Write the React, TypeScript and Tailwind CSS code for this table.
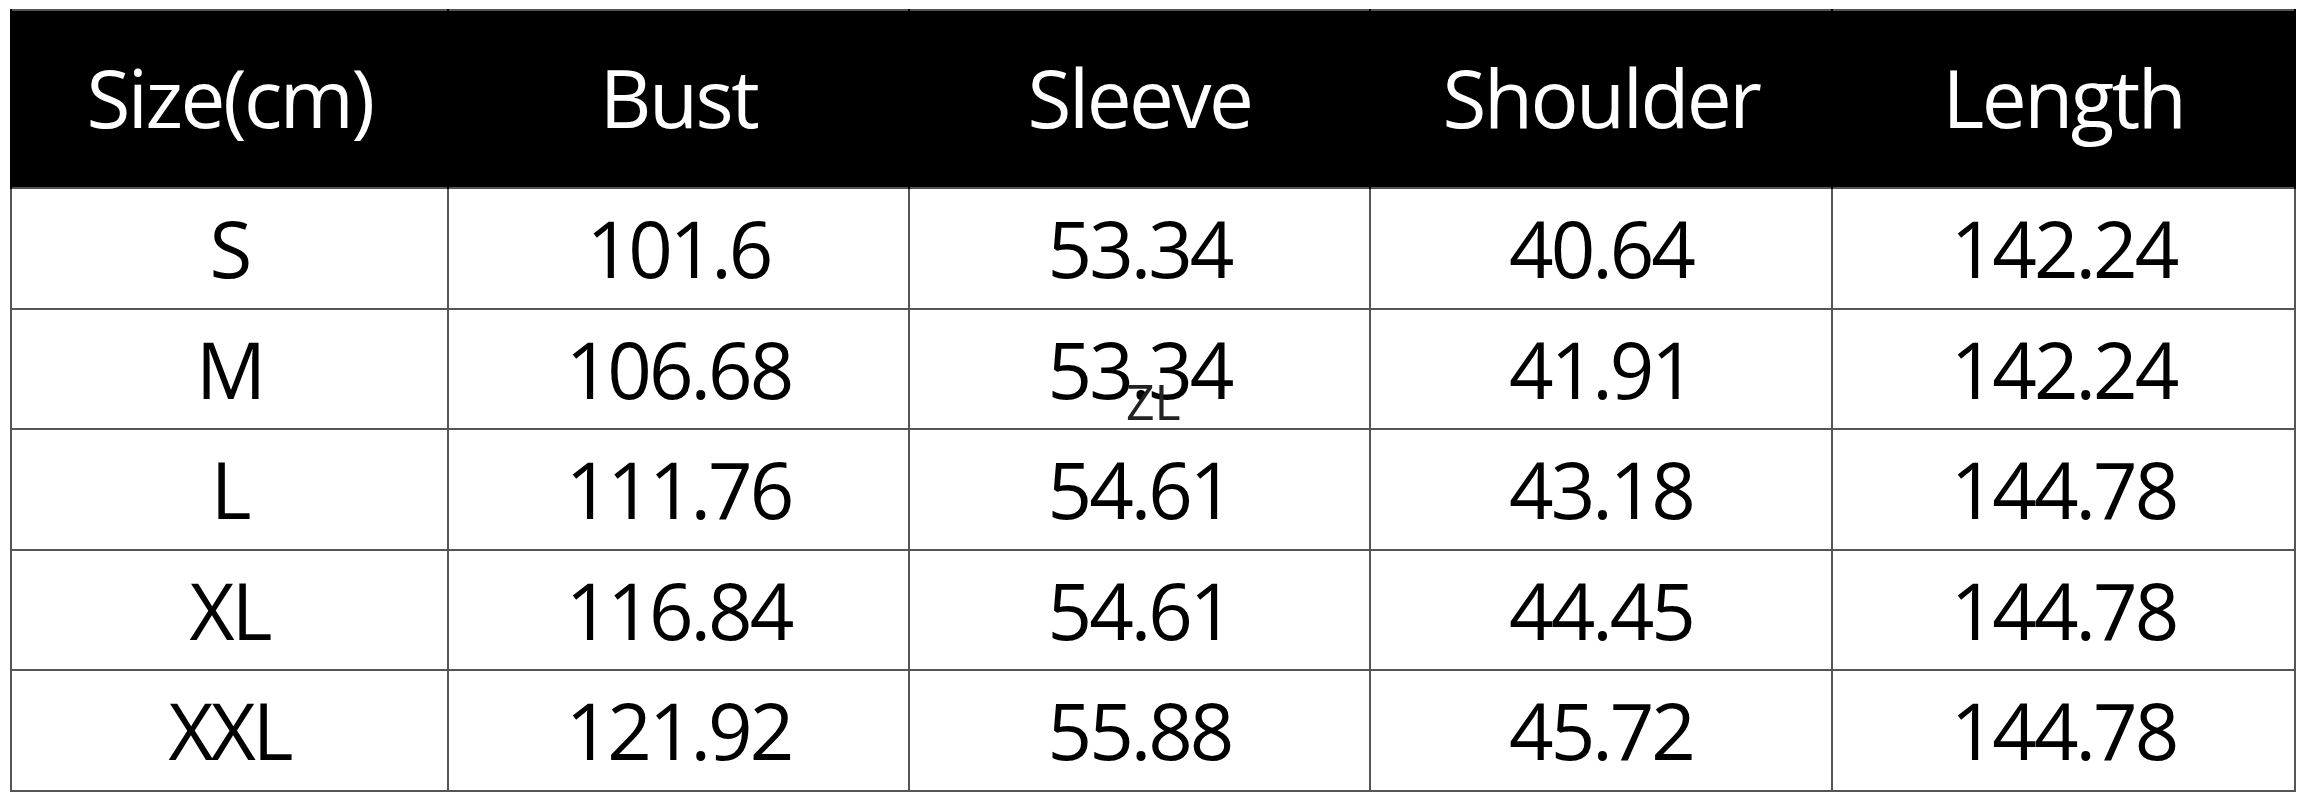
const headers = ["Size(cm)", "Bust", "Sleeve", "Shoulder", "Length"];

const rows = [
  ["S", "101.6", "53.34", "40.64", "142.24"],
  ["M", "106.68", "53.34", "41.91", "142.24"],
  ["L", "111.76", "54.61", "43.18", "144.78"],
  ["XL", "116.84", "54.61", "44.45", "144.78"],
  ["XXL", "121.92", "55.88", "45.72", "144.78"],
];

const colWidths = ["w-[437px]", "w-[461px]", "w-[461px]", "w-[462px]", "w-[463px]"];

export default function App() {
  return (
    <div className="relative h-[800px] w-[2305px] bg-white pl-[10px] pt-[9px] font-['Open_Sans',sans-serif]">
      <table className="w-[2284px] table-fixed border-collapse border-2 border-[#555]">
        <colgroup>
          {colWidths.map((w, i) => (
            <col key={i} className={w} />
          ))}
        </colgroup>
        <thead>
          <tr className="h-[178px] bg-black">
            {headers.map((h) => (
              <th
                key={h}
                className="border-x-2 border-black p-0 pb-[4px] text-center text-[80px] font-normal leading-none tracking-[-2.5px] text-white"
              >
                {h}
              </th>
            ))}
          </tr>
        </thead>
        <tbody>
          {rows.map((r) => (
            <tr key={r[0]} className="h-[120.5px]">
              {r.map((c, i) => (
                <td
                  key={i}
                  className="border-2 border-[#555] p-0 text-center text-[78px] leading-none tracking-[-3px] text-black"
                >
                  {c}
                </td>
              ))}
            </tr>
          ))}
        </tbody>
      </table>

      {/* watermark */}
      <div className="absolute left-[1126px] top-[376px] text-[50px] leading-none text-[#222]">ZL</div>
    </div>
  );
}
